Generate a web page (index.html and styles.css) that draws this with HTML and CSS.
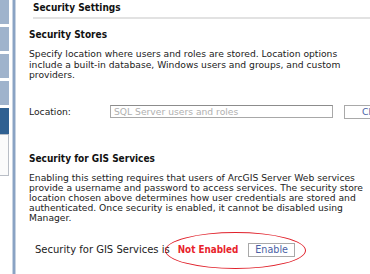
FILE: index.html
```html
<!DOCTYPE html>
<html>
<head>
<meta charset="utf-8">
<link rel="stylesheet" href="styles.css">
</head>
<body>
<div class="page">
  <nav class="side">
    <div class="tab"></div>
    <div class="tab"></div>
    <div class="tab"></div>
    <div class="tab"></div>
    <div class="tab active"></div>
    <div class="panel"></div>
  </nav>
  <div class="rail"></div>
  <main class="content">
    <h1 class="title">Security Settings</h1>
    <section class="block stores">
      <h2 class="heading">Security Stores</h2>
      <p class="text">Specify location where users and roles are stored. Location options include a built-in database, Windows users and groups, and custom providers.</p>
      <div class="location">
        <span class="label">Location:</span>
        <span class="input">SQL Server users and roles</span>
        <span class="btn">Change...</span>
      </div>
    </section>
    <section class="block gis">
      <h2 class="heading">Security for GIS Services</h2>
      <p class="text">Enabling this setting requires that users of ArcGIS Server Web services provide a username and password to access services. The security store location chosen above determines how user credentials are stored and authenticated. Once security is enabled, it cannot be disabled using Manager.</p>
      <div class="status">
        <span class="status-label">Security for GIS Services is</span>
        <span class="state">Not Enabled</span>
        <span class="btn enable">Enable</span>
        <span class="ring"></span>
      </div>
    </section>
  </main>
</div>
</body>
</html>
```
FILE: styles.css
```css
* { box-sizing: border-box; }
html, body { margin: 0; padding: 0; background: #fff; }
body {
  width: 370px;
  height: 274px;
  overflow: hidden;
  font-family: "DejaVu Sans", Verdana, sans-serif;
  color: #1a1a1a;
}
.page {
  display: flex;
  height: 274px;
}
.side {
  width: 9px;
  flex: none;
  display: flex;
  flex-direction: column;
  gap: 3px;
}
.tab {
  height: 24px;
  background: #9fb3cc;
  flex: none;
}
.tab.active { background: #2f6091; height: 26px; }
.panel {
  margin-top: -3px;
  height: 42px;
  border: 1px solid #b9bec6;
  border-left: none;
  background: #fbfbfb;
}
.rail {
  flex: none;
  width: 4px;
  margin-left: 3px;
  border-left: 1px solid #c7d3e2;
  border-right: 1px solid #c7d3e2;
  background: #8aa3c4;
}
.content {
  flex: 1;
  min-width: 0;
  padding-left: 13px;
}
.title {
  margin: 0 0 0 4px;
  padding: 3px 0 4px;
  font-family: "DejaVu Sans Condensed", "DejaVu Sans", sans-serif;
  font-size: 10px;
  font-weight: bold;
  line-height: 10px;
  border-bottom: 2px solid #e2e2e2;
  color: #111;
}
.heading {
  margin: 0;
  font-family: "DejaVu Sans Condensed", "DejaVu Sans", sans-serif;
  font-size: 10px;
  font-weight: bold;
  line-height: 12px;
  color: #111;
}
.stores .heading { margin-top: 10px; }
.text {
  margin: 8px 0 0;
  font-size: 9.2px;
  line-height: 10.5px;
  width: 334px;
  color: #222;
}
.location {
  display: flex;
  align-items: center;
  margin-top: 24px;
  font-size: 9.2px;
  white-space: nowrap;
}
.label { width: 81px; flex: none; color: #222; }
.input {
  flex: none;
  width: 223px;
  height: 13px;
  border: 1px solid #a8a8a8;
  border-top-color: #8c8c8c;
  padding: 0 3px;
  line-height: 11px;
  color: #b0b0b0;
}
.btn {
  flex: none;
  height: 14px;
  border: 1px solid #a9a9a9;
  padding: 0 6px;
  line-height: 12px;
  color: #4b5fa5;
  background: #fff;
  font-size: 9.2px;
}
.location .btn { margin-left: 11px; padding-left: 17px; }
.gis .heading { margin-top: 34px; }
.gis .text { margin-top: 8px; line-height: 10.2px; }
.status {
  position: relative;
  display: flex;
  align-items: center;
  margin-top: 19px;
  margin-left: 6px;
  font-size: 10px;
  white-space: nowrap;
}
.status-label { color: #222; }
.state {
  margin-left: 8px;
  color: #e8232b;
  font-family: "DejaVu Sans Condensed", "DejaVu Sans", sans-serif;
  font-size: 9.8px;
  font-weight: bold;
}
.enable { margin-left: 10px; padding: 0 6px; font-size: 9.6px; }
.ring {
  position: absolute;
  left: 130px;
  top: -11px;
  width: 141px;
  height: 37px;
  border: 1.5px solid #e0202a;
  border-radius: 50%;
}
```
